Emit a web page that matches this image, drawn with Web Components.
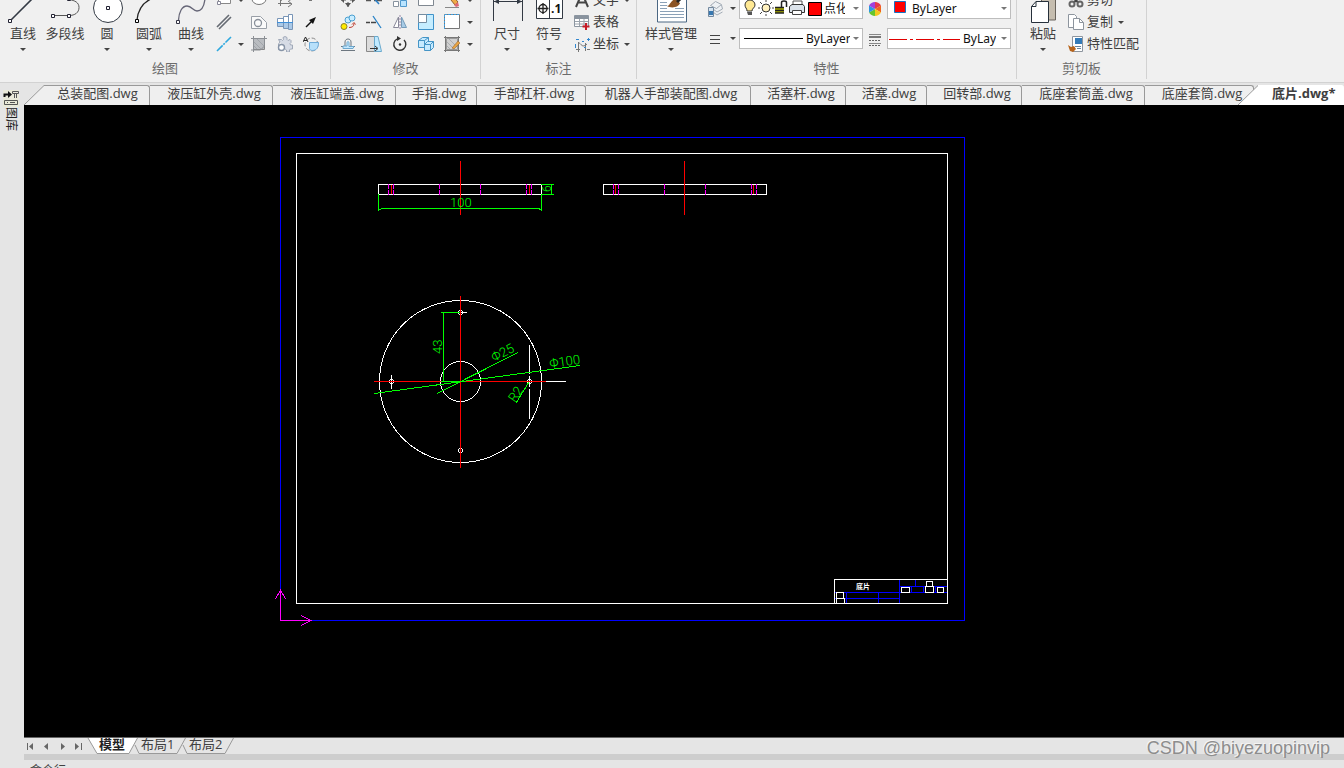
<!DOCTYPE html>
<html lang="zh-CN">
<head>
<meta charset="utf-8">
<title>底片.dwg</title>
<style>
  :root {
    --color-bar: #e5e5e5;
    --color-ribbon: #f0f0f0;
    --color-line: #d2d2d2;
    --color-edge: #999999;
    --color-text: #404040;
    --font-ui: "Open Sans", "Noto Sans CJK SC", sans-serif;
    --row: 22px;
  }
  body {
    margin: 0;
    background: var(--color-bar);
    color: var(--color-text);
    font-family: var(--font-ui);
    font-size: 13px;
  }
</style>
</head>
<body>
<cad-window>
  <ribbon-bar slot="ribbon">
    <ribbon-group label="绘图" style="--pad-left: 2px; --pad-right: 6px">
      <tool-large icon="line" drop>直线</tool-large>
      <tool-large icon="polyline">多段线</tool-large>
      <tool-large icon="circle" drop>圆</tool-large>
      <tool-large icon="arc" drop>圆弧</tool-large>
      <tool-large icon="curve" drop>曲线</tool-large>
      <tool-grid icons="rectangle ellipse axes point / xline region bolt ray / centerline hatch gear block" drops="0 8" lead></tool-grid>
    </ribbon-group>
    <ribbon-group label="修改" style="--pad-left: 4px; --pad-right: 5px">
      <tool-grid icons="move break array fillet erase / copy extend mirror scale select / offset stretch rotate boxes hatchedit" drops="4 9 14"></tool-grid>
    </ribbon-group>
    <ribbon-group label="标注" style="--pad-left: 5px; --pad-right: 1px">
      <tool-large icon="dimension" drop>尺寸</tool-large>
      <tool-large icon="symbol" drop>符号</tool-large>
      <tool-list>
        <tool-row icon="text" drop>文字</tool-row>
        <tool-row icon="table">表格</tool-row>
        <tool-row icon="coords" drop>坐标</tool-row>
      </tool-list>
    </ribbon-group>
    <ribbon-group label="特性" style="--pad-left: 1px; --pad-right: 5px">
      <tool-large icon="styles" drop wide>样式管理</tool-large>
      <property-panel></property-panel>
    </ribbon-group>
    <ribbon-group label="剪切板" style="--pad-left: 5px; --pad-right: 7px">
      <tool-large icon="paste" drop>粘贴</tool-large>
      <tool-list>
        <tool-row icon="cut">剪切</tool-row>
        <tool-row icon="copydoc" drop>复制</tool-row>
        <tool-row icon="match">特性匹配</tool-row>
      </tool-list>
    </ribbon-group>
  </ribbon-bar>
  <side-palette slot="side">图库</side-palette>
  <nav slot="tabs" aria-label="图纸" style="display: flex; overflow: hidden">
    <doc-tab first>总装配图.dwg</doc-tab>
    <doc-tab>液压缸外壳.dwg</doc-tab>
    <doc-tab>液压缸端盖.dwg</doc-tab>
    <doc-tab>手指.dwg</doc-tab>
    <doc-tab>手部杠杆.dwg</doc-tab>
    <doc-tab>机器人手部装配图.dwg</doc-tab>
    <doc-tab>活塞杆.dwg</doc-tab>
    <doc-tab>活塞.dwg</doc-tab>
    <doc-tab>回转部.dwg</doc-tab>
    <doc-tab>底座套筒盖.dwg</doc-tab>
    <doc-tab>底座套筒.dwg</doc-tab>
    <doc-tab active>底片.dwg*</doc-tab>
  </nav>
  <model-space slot="model"></model-space>
  <layout-bar slot="layouts">
    <layout-tab active>模型</layout-tab>
    <layout-tab>布局1</layout-tab>
    <layout-tab>布局2</layout-tab>
  </layout-bar>
  <command-line slot="command">命令行:</command-line>
  <span slot="mark">CSDN @biyezuopinvip</span>
</cad-window>

<script>
// Large icons use a 32x32 box, small ones 16x16.
const ICONS = {
  line: '<path d="M4 27 29 2" stroke="#333a44" stroke-width="1.6"/><path d="M1.500 26.500h3v3h-3z" fill="#fff" stroke="#223"/>',
  polyline: '<path d="M3 22.500h17c6 0 10-3 10-8s-4-7-10-8" stroke="#555"/><path d="M2.500 21.500h3v3h-3zM18.500 21.500h3v3h-3zM18.500 4.500h3v3h-3z" fill="#fff" stroke="#223"/>',
  circle: '<circle cx="17" cy="15" r="14.500" fill="#fff" stroke="#333a44"/><path d="M15.500 13.500h3v3h-3z" fill="#fff" stroke="#223"/>',
  arc: '<path d="M4 27C5 17 10 9 20 5" stroke="#222" stroke-width="1.300"/><path d="M2.500 26.500h3v3h-3z" fill="#fff" stroke="#000"/>',
  curve: '<path d="M3.500 27C4 19 7 13 12 13s6 5 10 5 7-4 8-12" stroke="#667" stroke-width="1.300"/><path d="M1.500 27.500h3v3h-3z" fill="#fff" stroke="#334"/>',
  dimension: '<path d="M2.500 4v24M31.500 4v24M3 8.500h28" stroke="#333a44"/><path d="M3 8.500 8 6v5zM31 8.500 26 6v5z" fill="#333a44"/>',
  symbol: '<path d="M3.500 2.500h26v23h-26zM16.500 3v22" fill="#fff" stroke="#333a44"/><circle cx="10" cy="15.500" r="4" stroke="#222" stroke-width="1.300"/><path d="M4.500 15.500h11M10 10v11" stroke="#222" stroke-width="1.300"/><text x="18" y="20" font-family="Open Sans" font-size="12" font-weight="700" fill="#111">.1</text>',
  styles: '<path d="M2.500 1v28h29V1" fill="#fff" stroke="#4b6783"/><path d="M5 9.500h7M5 12.500h7M5 15.500h7M5 18.500h24M5 21.500h24M5 24.500h24M20 15.500h9" stroke="#8ba1b7"/><path d="M12 13c3 0 3-5 8-7l5 4c-1 4-8 6-13 3z" fill="#8b5425"/><path d="m22 9 6-6" stroke="#222" stroke-width="3"/>',
  paste: '<path d="M14.500 1v26h14V1" fill="#c5bdaf" stroke="#68635c"/><path d="M4.500 13.500 9 8.500h12.500v21h-17z" fill="#fff" stroke="#26303b"/><path d="M4.500 13.500H9v-5" stroke="#26303b"/>',

  rectangle: '<path d="M2.500 2.500h12v9h-12z" fill="#fff" stroke="#888"/><path d="M1.500 9.500h3v3h-3z" fill="#fff" stroke="#889"/>',
  ellipse: '<ellipse cx="8" cy="7" rx="7" ry="5.500" fill="#fff" stroke="#777"/>',
  axes: '<path d="M3.500 2v12M1 11.500h13M4 9c2-5 7-6 9 0" stroke="#777"/><path d="m11 9 4 3-4 3" stroke="#777"/>',
  point: '<path d="M6 6h3v3H6z" fill="#777"/>',
  xline: '<path d="M1 13 13 1M3 15 15 3" stroke="#666b73" stroke-width="1.600"/>',
  region: '<path d="M.5 14.500v-12h9l6 6v6z" fill="#fafafa" stroke="#999fa7"/><circle cx="7" cy="9" r="3.500" stroke="#888f99" stroke-width="1.300"/>',
  bolt: '<path d="M.5 4.500h6v8h-6z" fill="#fff" stroke="#7895b7"/><path d="M1 9h5v3H1z" fill="#aac9e8"/><path d="M6.500 2.500h5v12h-5z" fill="#fff" stroke="#7895b7"/><path d="M7 9h4v5H7z" fill="#aac9e8"/><path d="M11.500.5h4v15h-4z" fill="#fff" stroke="#7895b7"/><path d="M12 9h3v6h-3z" fill="#aac9e8"/><path d="M0 8.500h16" stroke="#3f8fd8"/>',
  ray: '<path d="m3 13 7-7" stroke="#111" stroke-width="1.500"/><path d="m13 3-7 3 4 4z" fill="#111"/>',
  centerline: '<path d="M1 15 15 1" stroke="#2fa9df" stroke-width="1.600" stroke-dasharray="8 1 2 1"/>',
  hatch: '<path d="M2.500 2.500h11v11h-11z" fill="#b9bcc0" stroke="#888"/><path d="m3 6 7 7M3 10l3 3M6 3l7 7" stroke="#a0a4a9"/><path d="M13.500 0v10l-4 4H0M0 2.500h16M2.500 0v16" stroke="#8b8f94"/>',
  gear: '<path d="M1.500 3.500h3l1 1 1-1-.5-2 2-1 2 1v2l1 1 2-1 1 1v2l-1 1 .5 1.500h2v4h-2l-1 1v2h-3v-2l-2-1.500" fill="#d6dbe5" stroke="#a0a9b8"/><path d="M1.500 3.500 3 6 1.500 8v6" stroke="#a0a9b8"/><circle cx="4.500" cy="11.500" r="3" fill="#fff" stroke="#8794a7" stroke-width="1.400"/>',
  block: '<circle cx="8.500" cy="8.500" r="6.500" stroke="#888" stroke-dasharray="4 2"/><path d="M6.500 6.500h9c0 5-2 8-6 8-2 0-3-1-3-2z" fill="#b8e0fa" stroke="#6fabd8"/><path d="m0 6 2.500-5L5 6M1 4.500h3" stroke="#222"/>',

  move: '<path d="M8 1v14M1 8h14" stroke="#555" stroke-dasharray="5 4"/><path d="m8 15-3-4h6zM1 8l3-3v6zM15 8l-3-3v6z" fill="#555"/>',
  break: '<path d="M0 8.500h5M8 8.500h8" stroke="#555" stroke-width="1.500"/><path d="m5 3 8 9" stroke="#2a80c8" stroke-width="1.500"/>',
  array: '<path d="M1.500.5h5v5h-5zM9.500.5h5v5h-5zM1.500 9.500h5v5h-5z" fill="#fff" stroke="#88939f"/><path d="M8.500 8.500h6v6h-6z" fill="#b9e4ff" stroke="#5098cc"/>',
  fillet: '<path d="M.5 2.500h15v11H.5z" fill="#fff" stroke="#808891"/>',
  erase: '<path d="m3 3 4-1 7 8-3 3z" fill="#f0aa45" stroke="#936129"/><path d="m10 13 4-3 1 4-3 1z" fill="#de6a74"/><path d="M1 15.500h14" stroke="#888"/>',
  copy: '<circle cx="4" cy="12.500" r="3" fill="#ffeb00" stroke="#8a822c"/><circle cx="8" cy="6" r="3" fill="#c9edff" stroke="#4a9fd0"/><circle cx="12" cy="4" r="3" fill="#c9edff" stroke="#4a9fd0"/><path d="M9 13.500c3 0 5-1 5-4M12 10.500l2-2 1.500 2" stroke="#bd3c2e"/>',
  extend: '<path d="M0 8.500h4M5 8.500h5" stroke="#444" stroke-width="1.500"/><path d="m7 2 8 12" stroke="#2580c6" stroke-width="1.300"/>',
  mirror: '<path d="M6.500 3v10.500h-5z" fill="#fff" stroke="#889"/><path d="M9.500 3v10.500h5z" fill="#a8cbe6" stroke="#769bb8"/><path d="M8 1v14" stroke="#98a" stroke-dasharray="2 1"/>',
  scale: '<path d="M.5.5h15v15H.5z" fill="#c5edff" stroke="#3f92c9"/><path d="M.5.5h8v8h-8z" fill="#fff" stroke="#748da2"/>',
  select: '<path d="M.5.5h15v14H.5z" fill="#fff" stroke="#777"/><path d="M.5 15V.5H16" stroke="#3f9fe0" stroke-dasharray="2 1"/>',
  offset: '<path d="M1 14.500h14M1 10.500h4V6c0-4 6-4 6 0v4.500h4" stroke="#6d7780"/><path d="M3 12.500h10l1-2h-5V7c0-2-2-2-2 0v3H3z" fill="#c5e9ff" stroke="#6da8ce"/>',
  stretch: '<path d="M.5.5h10v15h-10z" fill="#dcdcdc" stroke="#888"/><path d="M8.500.5H12l3.500 15h-7z" fill="#bfe9ff" stroke="#6ba9cc"/><path d="M4 12.500h7M9 10l3 2.500L9 15" stroke="#333"/>',
  rotate: '<path d="M5 3a6 6 0 1 0 7 1" stroke="#333" stroke-width="1.400"/><path d="m5 0 4 2.500L5 5z" fill="#333"/><circle cx="8" cy="8.500" r="1.200" fill="#333"/>',
  boxes: '<path d="m.5 4.500 4-3h6v6l-3 4h-7z" fill="#c5eaff" stroke="#4595c6"/><path d="M.5 4.500h6v7M6.500 4.500l4-3" stroke="#4595c6"/><path d="m6.500 8.500 3-3h6v6l-3 3h-6z" fill="#c5eaff" stroke="#4595c6"/><path d="M6.500 8.500h6v6M12.500 8.500l3-3" stroke="#4595c6"/>',
  hatchedit: '<path d="M2.500 2.500h11v11h-11z" fill="#d0d0d0" stroke="#999"/><path d="m3 6 7 7M5 3l8 8M3 10l3 3" stroke="#aaadb0"/><path d="M0 1.500h16M0 14.500h16M1.500 0v16M14.500 0v16" stroke="#777"/><path d="m8 12 6-7 2 2-6 6z" fill="#e8a443" stroke="#94612b" stroke-width=".5"/>',

  text: '<path d="m2 15 6-14 6 14M4.500 10.500h7" stroke="#444" stroke-width="2"/>',
  table: '<path d="M.5 1.500h14v11H.5z" fill="#fff" stroke="#8b95a0"/><path d="M1 2h13v3H1z" fill="#89939e"/><path d="M1 7.500h13M1 10h13M5.500 5v7M10 5v7" stroke="#9ca4ad"/><path d="M12 9v7M8.500 12.500h7" stroke="#c51b26" stroke-width="2"/>',
  coords: '<path d="M4.500 6v10M2 13.500h4M5 7c2 0 3 6 8 1M11.500 7v8M13 13.500h3" stroke="#777"/><path d="M2 3.500h3M13 3.500h3M14.500 2v3M1.500 8v4M8 5.500h2M10 11.500h2" stroke="#3187cf"/>',
  cut: '<path d="m4 0 6 11M12 0 6 11" stroke="#444" stroke-width="1.800"/><circle cx="4" cy="12" r="2.500" stroke="#666" stroke-width="2"/><circle cx="12" cy="12" r="2.500" stroke="#666" stroke-width="2"/>',
  copydoc: '<path d="M.5.5h6l2 2v11h-8z" fill="#fff" stroke="#8d959e"/><path d="M5.500 4.500h6l4 4v7h-10z" fill="#fff" stroke="#8d959e"/><path d="M11.500 4.500v4h4" stroke="#8d959e"/>',
  match: '<path d="M4.500.5h10v15h-10z" fill="#fff" stroke="#8d959e"/><path d="M7 2h7v6H7z" fill="#347bb9"/><path d="M7 10.500h6M9 12.500h4" stroke="#69859f"/><path d="m0 9 3 2 3-1 2 3-3 3-3-1z" fill="#b8641b"/>',
  layers: '<path d="m3.500 4.500 5-4 6 3-5 4zM6 8l4 3 5.500-3-1-4M6 11l4 3 5.500-3" fill="#eef1f4" stroke="#a2abb5"/><path d="M1.500 6.500h5v9h-5z" fill="#d7e4f0" stroke="#73889e"/><path d="M2 10h4v4H2z" fill="#3878b0"/>',
  weights: '<path d="M3 4.500h10M3 8.500h10M3 12.500h10" stroke="#444"/>',
  linetypes: '<path d="M2 3.500h12M2 12.500h12" stroke="#888"/><path d="M2 6h12" stroke="#777" stroke-width="2"/><path d="M2 9.500h12M2 14.500h12" stroke="#666" stroke-dasharray="2 1"/>',
  palette: '<path d="M8 8V1a7 7 0 0 1 6 3.500z" fill="#e8364a"/><path d="m8 8 6-3.500v7z" fill="#f0641c"/><path d="m8 8 6 3.500A7 7 0 0 1 8 15z" fill="#f4c81e"/><path d="M8 8v7a7 7 0 0 1-6-3.500z" fill="#65c52d"/><path d="m8 8-6 3.500v-7z" fill="#2d96e0"/><path d="M8 8 2 4.500A7 7 0 0 1 8 1z" fill="#a03fdb"/>',
  bulb: '<path d="M5 11c0-3-2-3-2-6a5 5 0 0 1 10 0c0 3-3 3-3 6z" fill="#ffe994" stroke="#333"/><path d="M5 12h5v3H6z" fill="#555"/>',
  sun: '<circle cx="8" cy="8" r="4" fill="#fff1bf" stroke="#333"/><path d="M8 0v2M8 14v2M0 8h2M14 8h2M2 2l2 2M12 12l2 2M2 14l2-2M12 4l2-2" stroke="#444"/>',
  lock: '<path d="M1 8h9v6H1z" fill="#aaad00"/><path d="M1 8.500h9M1 11.500h9M1 14h9M7.500 8V3.500c0-2 5-2 5 0V8" stroke="#222" stroke-width="1.500"/>',
  printer: '<path d="M4 5V1h9v4" fill="#fff" stroke="#555"/><path d="M.5 6.500 3 4.500h11l1.500 2v6H.5z" fill="#dce3ea" stroke="#333"/><path d="M3.500 10.500h9v4h-9z" fill="#fff" stroke="#444"/>'
};

const svgIcon = (name, size = 16) =>
  `<svg width="${size}" height="${size}" viewBox="0 0 ${size} ${size}" fill="none" aria-hidden="true">${ICONS[name]}</svg>`;

const BUTTON_STYLE = `
  button {
    margin: 0;
    padding: 0;
    border: none;
    background: none;
    color: inherit;
    font: inherit;
    cursor: pointer;
  }
  svg { display: block; flex: none; }
  .drop {
    width: 0;
    height: 0;
    border: 3px solid transparent;
    border-top-color: #444;
    border-bottom: none;
  }
`;

class CadWindow extends HTMLElement {
  constructor() {
    super();
    this.attachShadow({ mode: 'open' }).innerHTML = `
      <style>
        :host {
          position: relative;
          display: flex;
          flex-direction: column;
          height: 100vh;
          overflow: hidden;
        }
        .body { display: flex; flex: 1; min-height: 0; }
        .work { display: flex; flex-direction: column; flex: 1; min-width: 0; }
        ::slotted([slot="tabs"]) { padding-top: 2px; }
        ::slotted([slot="model"]) { flex: 1; min-height: 0; }
        ::slotted([slot="mark"]) {
          position: absolute;
          right: 14px;
          bottom: 8px;
          font: 18px/24px "Liberation Sans", sans-serif;
          color: #8d8d8d;
          text-shadow: -1px -1px 0 #f4f4f4;
        }
      </style>
      <slot name="ribbon"></slot>
      <div class="body">
        <slot name="side"></slot>
        <div class="work">
          <slot name="tabs"></slot>
          <slot name="model"></slot>
          <slot name="layouts"></slot>
          <slot name="command"></slot>
        </div>
      </div>
      <slot name="mark"></slot>
    `;
  }
}

class RibbonBar extends HTMLElement {
  constructor() {
    super();
    this.attachShadow({ mode: 'open' }).innerHTML = `
      <style>
        :host {
          display: flex;
          align-items: flex-end;
          flex: none;
          height: 82px;
          overflow: hidden;
          background: var(--color-ribbon);
          border-bottom: 1px solid var(--color-line);
        }
      </style>
      <slot></slot>
    `;
  }
}

class RibbonGroup extends HTMLElement {
  constructor() {
    super();
    this.attachShadow({ mode: 'open' }).innerHTML = `
      <style>
        :host {
          display: flex;
          flex-direction: column;
          flex: none;
          margin-bottom: 3px;
          border-right: 1px solid var(--color-line);
        }
        .tools {
          display: flex;
          align-items: flex-end;
          height: calc(var(--row) * 3);
          padding: 0 var(--pad-right) 0 var(--pad-left);
        }
        .label {
          height: 24px;
          line-height: 26px;
          text-align: center;
          color: #6c6c6c;
        }
      </style>
      <div class="tools"><slot></slot></div>
      <div class="label">${this.getAttribute('label')}</div>
    `;
  }
}

class ToolLarge extends HTMLElement {
  constructor() {
    super();
    this.attachShadow({ mode: 'open' }).innerHTML = `
      <style>
        ${BUTTON_STYLE}
        :host { display: block; width: 42px; }
        :host([wide]) { width: 66px; }
        button {
          display: flex;
          flex-direction: column;
          align-items: center;
          width: 100%;
          white-space: nowrap;
        }
        .label { height: 18px; line-height: 16px; }
        .foot { display: flex; align-items: center; height: 12px; }
      </style>
      <button>
        ${svgIcon(this.getAttribute('icon'), 32)}
        <span class="label"><slot></slot></span>
        <span class="foot">${this.hasAttribute('drop') ? '<i class="drop"></i>' : ''}</span>
      </button>
    `;
  }
}

// Three rows of small buttons; "drops" lists the indexes that open a menu.
class ToolGrid extends HTMLElement {
  constructor() {
    super();
    const drops = this.getAttribute('drops').split(' ').map(Number);
    const lead = this.hasAttribute('lead');
    let index = 0;
    const rows = this.getAttribute('icons').split(' / ').map((row) => {
      const cells = row.split(' ').map((name, col, all) => {
        const drop = drops.includes(index++);
        const gap = lead ? col === 0 : col === all.length - 1;
        return `<button aria-label="${name}">${svgIcon(name)}</button>` +
          (gap ? `<span class="gap">${drop ? '<i class="drop"></i>' : ''}</span>` : '');
      });
      return `<div class="row">${cells.join('')}</div>`;
    });
    this.attachShadow({ mode: 'open' }).innerHTML = `
      <style>
        ${BUTTON_STYLE}
        :host { display: block; }
        .row { display: flex; height: var(--row); }
        button {
          display: flex;
          align-items: center;
          justify-content: center;
          width: 26px;
        }
        .gap {
          display: flex;
          align-items: center;
          justify-content: center;
          width: 10px;
        }
        :host([lead]) button:first-child { width: 24px; }
      </style>
      ${rows.join('')}
    `;
  }
}

class ToolList extends HTMLElement {
  constructor() {
    super();
    this.attachShadow({ mode: 'open' }).innerHTML = `
      <style>
        :host { display: flex; flex-direction: column; }
      </style>
      <slot></slot>
    `;
  }
}

class ToolRow extends HTMLElement {
  constructor() {
    super();
    this.attachShadow({ mode: 'open' }).innerHTML = `
      <style>
        ${BUTTON_STYLE}
        :host { display: block; height: var(--row); }
        button {
          display: flex;
          align-items: center;
          height: 100%;
          white-space: nowrap;
        }
        svg { margin: 0 3px 0 4px; }
        .label { height: 20px; line-height: 18px; }
        .drop { margin: 0 5px; }
      </style>
      <button>
        ${svgIcon(this.getAttribute('icon'))}
        <span class="label"><slot></slot></span>
        ${this.hasAttribute('drop') ? '<i class="drop"></i>' : ''}
      </button>
    `;
  }
}

class PropertyPanel extends HTMLElement {
  constructor() {
    super();
    this.attachShadow({ mode: 'open' }).innerHTML = `
      <style>
        ${BUTTON_STYLE}
        :host {
          display: grid;
          grid-template-columns: 22px 13px 124px 24px 124px;
          grid-auto-rows: 21px;
          row-gap: 9px;
          align-items: center;
          justify-items: center;
          padding-bottom: 6px;
        }
      </style>
      <button aria-label="图层">${svgIcon('layers')}</button>
      <i class="drop"></i>
      <combo-box label="图层" value="点化线" inset="84" trim="17">
        <svg width="82" height="19" viewBox="0 0 82 19" fill="none">
          <g transform="translate(2 1)">${ICONS.bulb}</g>
          <g transform="translate(18 1)">${ICONS.sun}</g>
          <g transform="translate(34 0)">${ICONS.lock}</g>
          <g transform="translate(49 1)">${ICONS.printer}</g>
          <path d="M68.500 3.500h13v13h-13z" fill="#f00" stroke="#000"/>
        </svg>
      </combo-box>
      <button aria-label="颜色">${svgIcon('palette')}</button>
      <combo-box label="颜色" value="ByLayer" inset="24" trim="14">
        <svg width="24" height="19" viewBox="0 0 24 19">
          <path d="M6.500 2.500h11v11h-11z" fill="#f00" stroke="#1673c4"/>
        </svg>
      </combo-box>
      <button aria-label="线宽">${svgIcon('weights')}</button>
      <i class="drop"></i>
      <combo-box label="线宽" value="ByLayer" inset="66" trim="12">
        <svg width="66" height="19" viewBox="0 0 66 19"><path d="M4 9.500h59" stroke="#000"/></svg>
      </combo-box>
      <button aria-label="线型">${svgIcon('linetypes')}</button>
      <combo-box label="线型" value="ByLayer" inset="75" trim="14">
        <svg width="74" height="19" viewBox="0 0 74 19">
          <path d="M1 10.500h71" stroke="#e00000" stroke-dasharray="18 3 3 3"/>
        </svg>
      </combo-box>
    `;
  }
}

class ComboBox extends HTMLElement {
  constructor() {
    super();
    this.attachShadow({ mode: 'open' }).innerHTML = `
      <style>
        ${BUTTON_STYLE}
        :host {
          position: relative;
          display: block;
          width: 100%;
          height: 21px;
          color: #111;
        }
        select {
          appearance: none;
          box-sizing: border-box;
          width: 100%;
          height: 100%;
          margin: 0;
          padding: 0 ${this.getAttribute('trim')}px 0 ${this.getAttribute('inset')}px;
          border: 1px solid #bdbdbd;
          border-radius: 0;
          background: #fff;
          color: inherit;
          font: 12px "Noto Sans", "Noto Sans CJK SC", sans-serif;
        }
        .face, .drop { position: absolute; pointer-events: none; }
        .face { left: 1px; top: 1px; }
        .drop { right: 4px; top: 9px; border-top-color: #777; }
      </style>
      <select aria-label="${this.getAttribute('label')}">
        <option>${this.getAttribute('value')}</option>
      </select>
      <span class="face"><slot></slot></span>
      <i class="drop"></i>
    `;
  }
}

class SidePalette extends HTMLElement {
  constructor() {
    super();
    this.attachShadow({ mode: 'open' }).innerHTML = `
      <style>
        ${BUTTON_STYLE}
        :host {
          display: block;
          flex: none;
          width: 24px;
          background: var(--color-bar);
        }
        button {
          display: flex;
          flex-direction: column;
          align-items: center;
          width: 22px;
          padding-top: 7px;
          font-size: 12px;
          line-height: 18px;
        }
        .label { writing-mode: vertical-rl; text-orientation: sideways; color: #222; }
      </style>
      <button>
        <svg width="16" height="17" viewBox="0 0 16 17" fill="none">
          <path d="M0 0h16v17H0z" fill="#e9e9d8"/>
          <path d="M1.500 7V4.500h4" stroke="#111" stroke-width="2"/>
          <path d="m5 1 4 3.500L5 8z" fill="#111"/>
          <path d="M9.500 1.500h6v2h-6zM11.500 4v4M13.500 4v4M1.500 10.500h13v4h-13zM4 12.500h1M7 12.500h5" stroke="#555"/>
        </svg>
        <span class="label"><slot></slot></span>
      </button>
    `;
  }
}

class DocTab extends HTMLElement {
  constructor() {
    super();
    this.attachShadow({ mode: 'open' }).innerHTML = `
      <style>
        ${BUTTON_STYLE}
        :host {
          display: flex;
          flex: none;
          height: 20px;
        }
        button {
          box-sizing: border-box;
          width: calc(var(--chars) * 14px + 53px);
          height: 100%;
          padding: 0 0 4px 6px;
          border-top: 1px solid var(--color-edge);
          border-right: 1px solid var(--color-edge);
          border-radius: 0 3px 0 0;
          background: #efefef;
          line-height: 15px;
          white-space: nowrap;
        }
        svg { display: none; }
        :host([first]) svg, :host([active]) svg { display: block; }
        :host([first]) button { width: 106px; padding-left: 2px; }
        :host([active]) { flex: 1 0 auto; position: relative; margin-left: -16px; }
        :host([active]) button {
          flex: 1;
          padding-left: 14px;
          border-right: none;
          border-top-color: #fff;
          background: #fff;
          font-weight: 700;
          text-align: left;
        }
      </style>
      <svg width="20" height="20" viewBox="0 0 20 20">
        <path d="M0 20 20 .5V20z" fill="${this.hasAttribute('active') ? '#fff' : '#efefef'}"/>
        <path d="M0 20 20 .5" stroke="#999"/>
      </svg>
      <button><slot></slot></button>
    `;
  }

  connectedCallback() {
    const name = this.textContent.split('.')[0];
    this.style.setProperty('--chars', name.length);
  }
}

class ModelSpace extends HTMLElement {
  constructor() {
    super();
    // Hidden edges of the two disc profiles, measured from the left edge.
    const hidden = (x, list) => list.map((d) => `<path d="M${x + d}.5 184v11"/>`).join('');
    this.attachShadow({ mode: 'open' }).innerHTML = `
      <style>
        :host { display: block; background: #000; overflow: hidden; }
        svg { display: block; width: 100%; height: 100%; }
        g { fill: none; shape-rendering: crispEdges; }
        .blue { stroke: #0000ff; }
        .white { stroke: #ffffff; }
        .red { stroke: #ff0000; }
        .green { stroke: #00ff00; }
        .magenta { stroke: #ff00ff; }
        .dashed { stroke-dasharray: 5 1; }
        text { fill: #00ff00; font: 300 13px Roboto, "Liberation Sans", sans-serif; }
        .small { font-size: 12px; }
        .title { fill: #ffffff; font: 700 7px "Noto Sans CJK SC", sans-serif; }
      </style>
      <svg role="img" aria-label="底片">
        <g transform="translate(-24 -105)">
          <g class="blue"><path d="M280.500 137.500h684v483h-684z"/></g>
          <g class="white"><path d="M296.500 153.500h651v450h-651z"/></g>

          <g class="white">
            <path d="M378.500 184.500h163v10h-163zM603.500 184.500h163v10h-163z"/>
            <circle cx="460.500" cy="381.500" r="81"/>
            <circle cx="460.500" cy="381.500" r="20"/>
            <circle cx="391.500" cy="381.500" r="2"/>
            <circle cx="529.500" cy="381.500" r="2"/>
            <circle cx="460.500" cy="312.500" r="2"/>
            <circle cx="460.500" cy="450.500" r="2"/>
            <path d="M391.500 375v14M529.500 345v29M529.500 376v11M529.500 389v30M460 312.500h7M546 381.500h20"/>
          </g>
          <g class="magenta dashed">
            ${hidden(378, [10, 15, 61, 102, 148, 153])}
            ${hidden(603, [10, 15, 61, 102, 148, 153])}
          </g>
          <g class="red">
            <path d="M391.500 185v9M529.500 185v9M615.500 185v9M753.500 185v9"/>
            <path d="M460.500 161v54M684.500 161v54M374 381.500h172M460.500 296v172"/>
          </g>
          <g class="green">
            <path d="M378.500 194v17M541.500 194v17M379 209.500h2M381 208.500h159M539 209.500h2"/>
            <path d="M541 184.500h13M541 194.500h13M551.500 184v10"/>
            <path d="M441 312.500h19M443.500 312v69M441 381.500h19"/>
            <path d="M374 393.500 580 365.500M437 393.500 518 352.500M516 403l13-21"/>
          </g>
          <text x="450" y="207">100</text>
          <text class="small" transform="translate(551 192) rotate(-90)">6</text>
          <text transform="translate(442 354) rotate(-90)">43</text>
          <text transform="translate(494 362) rotate(-27)">Φ25</text>
          <text transform="translate(550 368) rotate(-8)">Φ100</text>
          <text transform="translate(515 403) rotate(-56)">R2</text>

          <g class="blue">
            <path d="M834 592.500h65M834 598.500h65M846.500 592v11M878.500 592v11M899.500 580v23"/>
            <path d="M899 586.500h48M899 592.500h48M915.500 580v6M911.500 586v6M923.500 586v6M935.500 586v6"/>
          </g>
          <g class="white">
            <path d="M834.500 603v-23.500h113"/>
            <path d="M836.500 592.500h7v6h-7zM836.500 598.500h8v5h-8zM901.500 587.500h8v5h-8zM926.500 581.500h6v5h-6zM925.500 586.500h8v6h-8zM937.500 587.500h6v5h-6z"/>
          </g>
          <text class="title" x="856" y="589">底片</text>

          <g class="magenta">
            <path d="M280.500 590v30.500h31M275.500 599l5-9 5 9M301 615.500l10 5-10 5"/>
          </g>
        </g>
      </svg>
    `;
  }
}

class LayoutBar extends HTMLElement {
  constructor() {
    super();
    this.attachShadow({ mode: 'open' }).innerHTML = `
      <style>
        ${BUTTON_STYLE}
        :host {
          display: flex;
          flex: none;
          height: 16px;
          border-top: 1px solid #666;
          border-bottom: 6px solid #cdcdcd;
          background: var(--color-bar);
        }
        button {
          display: flex;
          align-items: center;
          justify-content: flex-start;
          width: 16px;
          padding-left: 2px;
        }
        button:last-of-type { margin-right: 1px; }
      </style>
      <button aria-label="首个"><svg width="8" height="8" viewBox="0 0 8 8"><path d="M1.500 1v7" stroke="#666"/><path d="M7 1v7L3 4.500z" fill="#666"/></svg></button>
      <button aria-label="上一个"><svg width="8" height="8" viewBox="0 0 8 8"><path d="M6 1v7L2 4.500z" fill="#666"/></svg></button>
      <button aria-label="下一个"><svg width="8" height="8" viewBox="0 0 8 8"><path d="M3 1v7l4-3.500z" fill="#666"/></svg></button>
      <button aria-label="末个"><svg width="8" height="8" viewBox="0 0 8 8"><path d="M7.500 1v7" stroke="#666"/><path d="M1 1v7l4-3.500z" fill="#666"/></svg></button>
      <slot></slot>
    `;
  }
}

class LayoutTab extends HTMLElement {
  constructor() {
    super();
    const active = this.hasAttribute('active');
    this.attachShadow({ mode: 'open' }).innerHTML = `
      <style>
        ${BUTTON_STYLE}
        :host { display: block; width: 48px; height: 16px; }
        button {
          display: grid;
          justify-items: start;
          width: 48px;
          height: 16px;
          line-height: 13px;
          white-space: nowrap;
        }
        svg, .label { grid-area: 1 / 1; }
        svg { overflow: visible; }
        :host([active]) { font-weight: 700; color: #222; }
        .label { z-index: 1; padding-left: 4px; }
        :host([active]) .label { padding-left: 10px; }
      </style>
      <button>
        <svg width="48" height="16" viewBox="0 0 48 16">
          <path d="${active ? 'M-1 0 8 15.500h32L48.500 0' : 'M-2 7l4 8.500h38L48.500 0'}"
            fill="${active ? '#fff' : 'none'}" stroke="#999"/>
        </svg>
        <span class="label"><slot></slot></span>
      </button>
    `;
  }
}

class CommandLine extends HTMLElement {
  constructor() {
    super();
    this.attachShadow({ mode: 'open' }).innerHTML = `
      <style>
        :host {
          display: block;
          flex: none;
          height: 8px;
          padding-left: 6px;
          overflow: hidden;
          background: var(--color-bar);
          font-size: 12px;
          line-height: 22px;
        }
      </style>
      <slot></slot>
    `;
  }
}

customElements.define('cad-window', CadWindow);
customElements.define('ribbon-bar', RibbonBar);
customElements.define('ribbon-group', RibbonGroup);
customElements.define('tool-large', ToolLarge);
customElements.define('tool-grid', ToolGrid);
customElements.define('tool-list', ToolList);
customElements.define('tool-row', ToolRow);
customElements.define('property-panel', PropertyPanel);
customElements.define('combo-box', ComboBox);
customElements.define('side-palette', SidePalette);
customElements.define('doc-tab', DocTab);
customElements.define('model-space', ModelSpace);
customElements.define('layout-bar', LayoutBar);
customElements.define('layout-tab', LayoutTab);
customElements.define('command-line', CommandLine);
</script>
</body>
</html>
